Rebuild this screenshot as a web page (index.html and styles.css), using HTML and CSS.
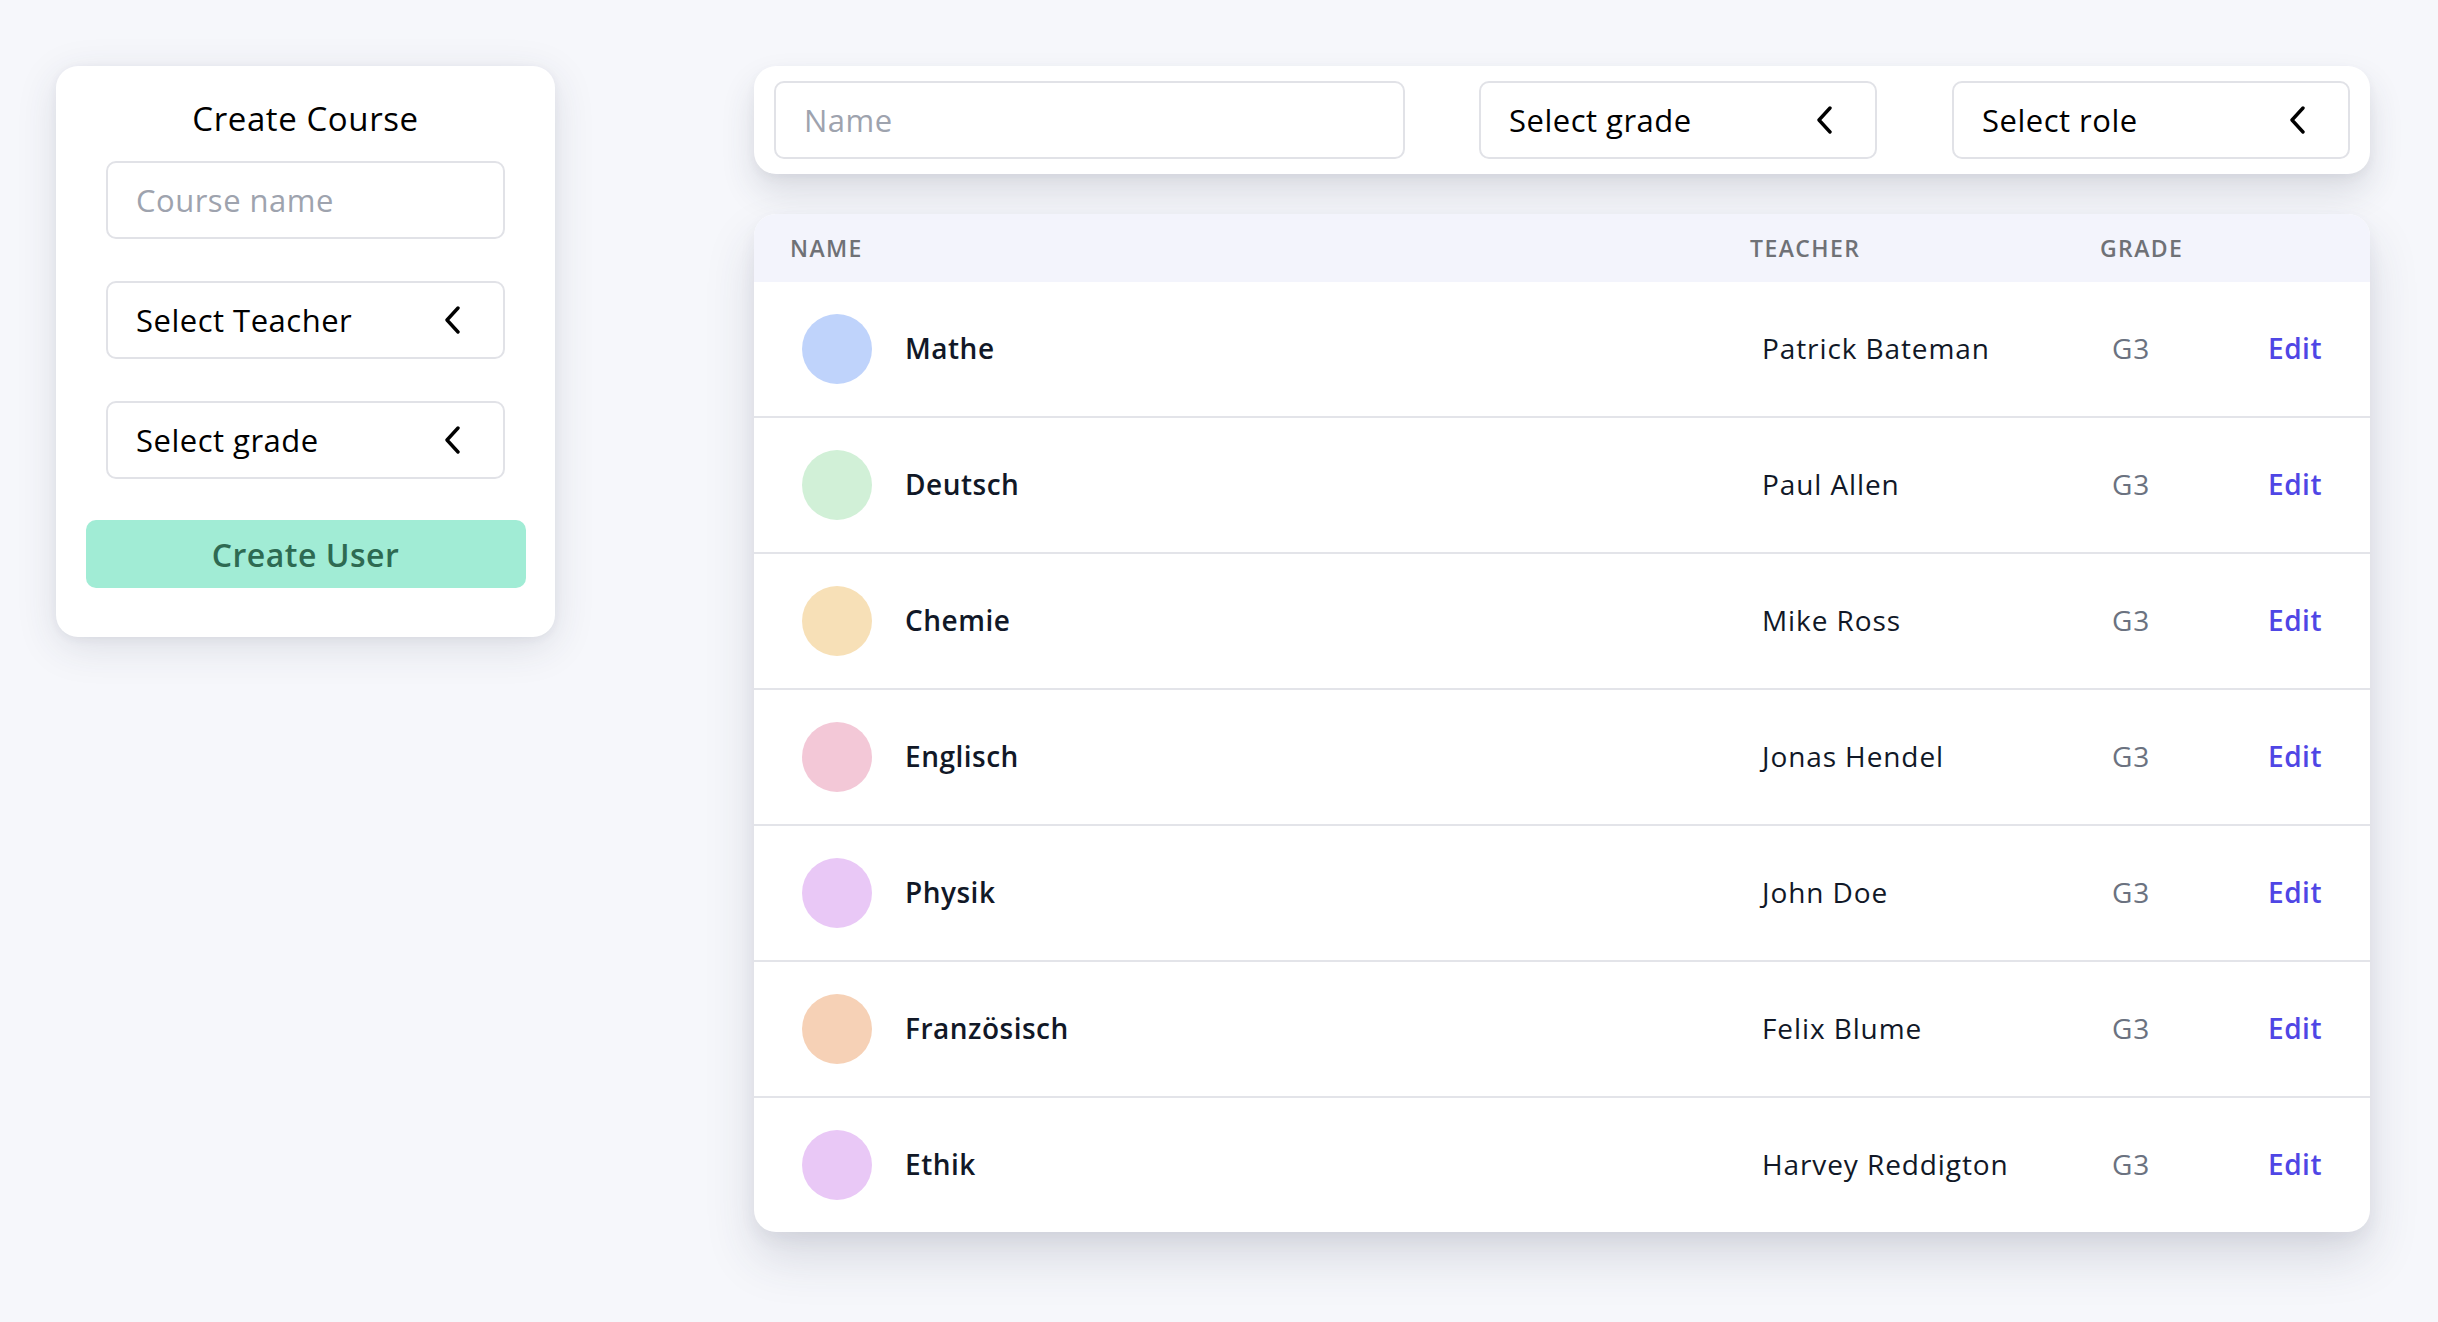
FILE: index.html
```html
<!DOCTYPE html>
<html lang="en">
<head>
<meta charset="utf-8">
<title>Courses</title>
<link rel="stylesheet" href="styles.css">
</head>
<body>
<div class="page">
  <aside class="create-card">
    <h2 class="create-title">Create Course</h2>
    <div class="field"><span class="placeholder">Course name</span></div>
    <div class="field select"><span>Select Teacher</span>
      <svg class="chev" viewBox="0 0 16 28" width="16" height="28"><path d="M14 2 L3 14 L14 26" fill="none" stroke="#000" stroke-width="3.4" stroke-linecap="round" stroke-linejoin="round"/></svg>
    </div>
    <div class="field select"><span>Select grade</span>
      <svg class="chev" viewBox="0 0 16 28" width="16" height="28"><path d="M14 2 L3 14 L14 26" fill="none" stroke="#000" stroke-width="3.4" stroke-linecap="round" stroke-linejoin="round"/></svg>
    </div>
    <button class="create-btn">Create User</button>
  </aside>

  <main class="main">
    <div class="filter-bar">
      <div class="field name-field"><span class="placeholder">Name</span></div>
      <div class="field select top-select"><span>Select grade</span>
        <svg class="chev" viewBox="0 0 16 28" width="16" height="28"><path d="M14 2 L3 14 L14 26" fill="none" stroke="#000" stroke-width="3.4" stroke-linecap="round" stroke-linejoin="round"/></svg>
      </div>
      <div class="field select top-select"><span>Select role</span>
        <svg class="chev" viewBox="0 0 16 28" width="16" height="28"><path d="M14 2 L3 14 L14 26" fill="none" stroke="#000" stroke-width="3.4" stroke-linecap="round" stroke-linejoin="round"/></svg>
      </div>
    </div>

    <div class="table-card">
      <div class="row head">
        <div class="th">Name</div>
        <div class="th">Teacher</div>
        <div class="th">Grade</div>
        <div class="th"></div>
      </div>
      <div class="row">
        <div class="td name-cell"><span class="dot c-blue"></span><span class="course">Mathe</span></div>
        <div class="td teacher">Patrick Bateman</div>
        <div class="td grade">G3</div>
        <div class="td action"><a class="edit">Edit</a></div>
      </div>
      <div class="row">
        <div class="td name-cell"><span class="dot c-green"></span><span class="course">Deutsch</span></div>
        <div class="td teacher">Paul Allen</div>
        <div class="td grade">G3</div>
        <div class="td action"><a class="edit">Edit</a></div>
      </div>
      <div class="row">
        <div class="td name-cell"><span class="dot c-yellow"></span><span class="course">Chemie</span></div>
        <div class="td teacher">Mike Ross</div>
        <div class="td grade">G3</div>
        <div class="td action"><a class="edit">Edit</a></div>
      </div>
      <div class="row">
        <div class="td name-cell"><span class="dot c-pink"></span><span class="course">Englisch</span></div>
        <div class="td teacher">Jonas Hendel</div>
        <div class="td grade">G3</div>
        <div class="td action"><a class="edit">Edit</a></div>
      </div>
      <div class="row">
        <div class="td name-cell"><span class="dot c-purple"></span><span class="course">Physik</span></div>
        <div class="td teacher">John Doe</div>
        <div class="td grade">G3</div>
        <div class="td action"><a class="edit">Edit</a></div>
      </div>
      <div class="row">
        <div class="td name-cell"><span class="dot c-orange"></span><span class="course">Französisch</span></div>
        <div class="td teacher">Felix Blume</div>
        <div class="td grade">G3</div>
        <div class="td action"><a class="edit">Edit</a></div>
      </div>
      <div class="row">
        <div class="td name-cell"><span class="dot c-purple"></span><span class="course">Ethik</span></div>
        <div class="td teacher">Harvey Reddigton</div>
        <div class="td grade">G3</div>
        <div class="td action"><a class="edit">Edit</a></div>
      </div>
    </div>
  </main>
</div>
</body>
</html>
```

FILE: styles.css
```css
* { box-sizing: border-box; }

html, body {
  margin: 0;
  padding: 0;
}

body {
  background: #f6f7fb;
  font-family: "Open Sans", "Liberation Sans", sans-serif;
  color: #000;
  width: 2438px;
  height: 1322px;
  overflow: hidden;
}

.page {
  display: flex;
  align-items: flex-start;
  gap: 199px;
  padding: 66px 68px 0 56px;
}

/* ---------- left card ---------- */
.create-card {
  width: 499px;
  flex: none;
  background: #fff;
  border-radius: 22px;
  box-shadow: 0 10px 40px rgba(50, 54, 80, 0.13), 0 2px 10px rgba(50, 54, 80, 0.06);
  padding: 31px 30px 49px;
  display: flex;
  flex-direction: column;
  align-items: center;
}

.create-title {
  margin: 0 0 20px;
  font-size: 33px;
  font-weight: 500;
  line-height: 44px;
  letter-spacing: 0.6px;
  color: #000;
}

.field {
  height: 78px;
  border: 2px solid #e1e2e7;
  border-radius: 10px;
  background: #fff;
  display: flex;
  align-items: center;
  padding: 0 28px;
  font-size: 31px;
  letter-spacing: 0.5px;
}

.create-card .field {
  width: 399px;
  margin-bottom: 42px;
}

.placeholder {
  color: #9ea3ae;
}

.select {
  justify-content: space-between;
  padding-right: 43px;
}

.chev {
  display: block;
  flex: none;
}

.create-btn {
  width: 440px;
  height: 68px;
  margin-top: -1px;
  border: none;
  border-radius: 10px;
  background: #a1ecd5;
  color: #2e6a52;
  font-family: inherit;
  font-size: 32px;
  font-weight: 600;
  letter-spacing: 0.5px;
}

/* ---------- right side ---------- */
.main {
  flex: 1;
  display: flex;
  flex-direction: column;
  gap: 40px;
}

.filter-bar {
  height: 108px;
  background: #fff;
  border-radius: 22px;
  box-shadow: 0 18px 34px rgba(50, 54, 80, 0.14), 0 4px 10px rgba(50, 54, 80, 0.05);
  padding: 15px 20px;
  display: flex;
  justify-content: flex-start;
}

.name-field {
  width: 631px;
  margin-right: 74px;
}

.top-select {
  width: 398px;
}

.top-select + .top-select {
  margin-left: 75px;
}

/* ---------- table ---------- */
.table-card {
  background: #fff;
  border-radius: 22px;
  overflow: hidden;
  box-shadow: 0 26px 50px rgba(50, 54, 80, 0.15), 0 8px 16px rgba(50, 54, 80, 0.06);
}

.row {
  display: grid;
  grid-template-columns: 960px 350px 158px 1fr;
  align-items: center;
  height: 136px;
  border-bottom: 2px solid #e3e4e9;
}

.row:last-child {
  border-bottom: none;
  height: 134px;
}

.row.head {
  height: 68px;
  background: #f3f4fc;
  border-bottom: none;
}

.th {
  padding-left: 36px;
  font-size: 23px;
  font-weight: 600;
  text-transform: uppercase;
  letter-spacing: 1.4px;
  color: #6f7176;
}

.td {
  padding-left: 48px;
  font-size: 28px;
  letter-spacing: 0.9px;
  padding-bottom: 2px;
}

.name-cell {
  display: flex;
  align-items: center;
  padding-bottom: 0;
}

.name-cell .course {
  padding-bottom: 2px;
}

.dot {
  width: 70px;
  height: 70px;
  border-radius: 50%;
  flex: none;
  margin-right: 33px;
}

.c-blue { background: #bfd3fb; }
.c-green { background: #d1f0d7; }
.c-yellow { background: #f7e0b7; }
.c-pink { background: #f3c8d7; }
.c-purple { background: #e9c8f6; }
.c-orange { background: #f6d1b6; }

.course {
  font-weight: 600;
  color: #111827;
  letter-spacing: 0.5px;
}

.teacher {
  color: #111827;
}

.grade {
  color: #6b7280;
}

.action {
  padding-left: 0;
  padding-right: 48px;
  text-align: right;
}

.edit {
  color: #4f46e5;
  font-weight: 600;
  letter-spacing: 0.5px;
}
```
